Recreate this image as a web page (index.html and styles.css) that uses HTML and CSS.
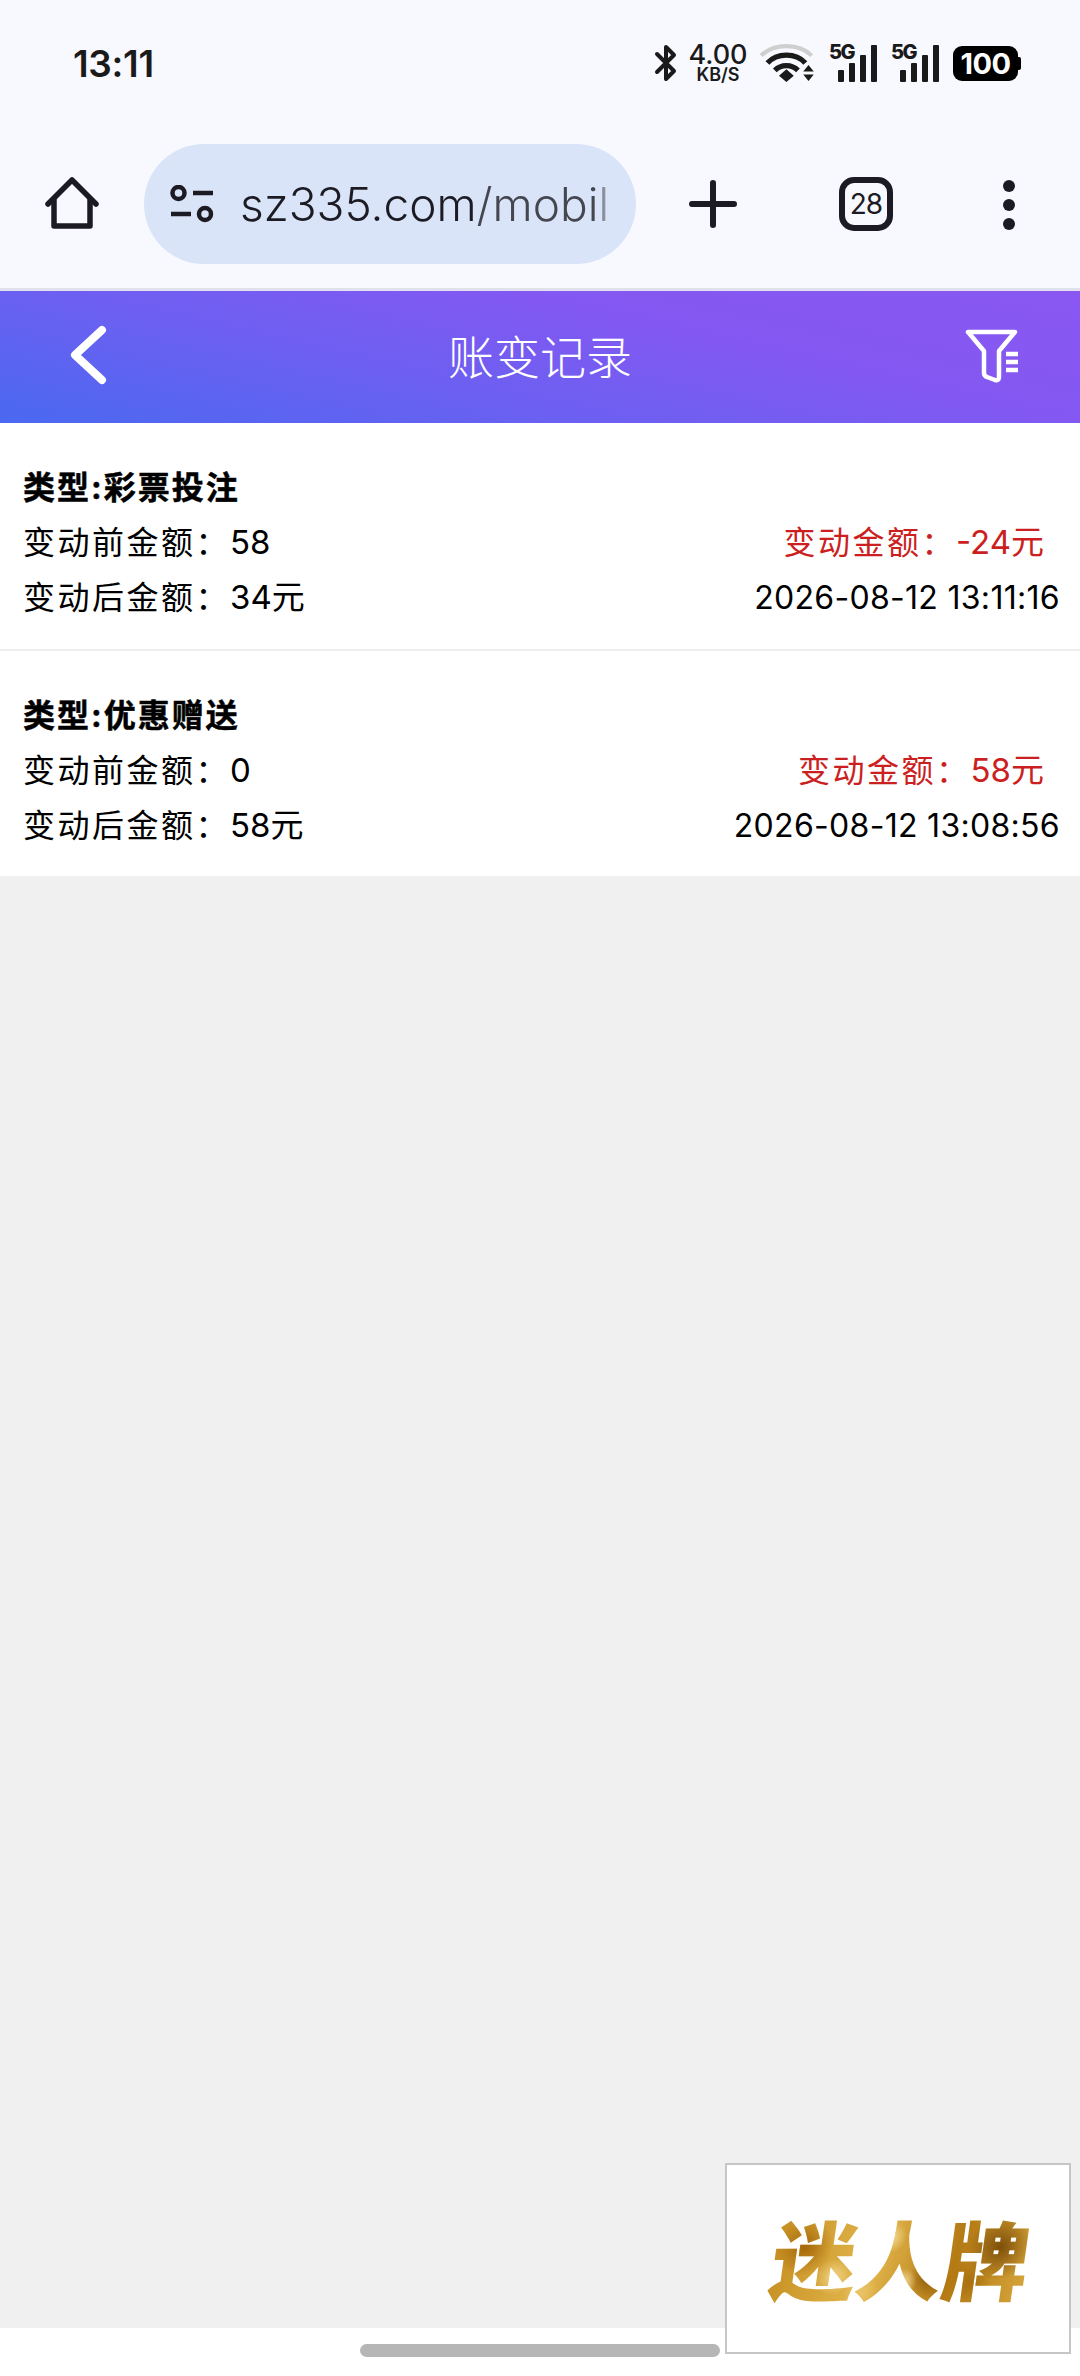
FILE: index.html
```html
<!DOCTYPE html>
<html lang="zh-CN">
<head>
    <meta charset="UTF-8">
    <meta name="viewport" content="width=device-width, initial-scale=1.0">
    <title>账变记录</title>
    <link rel="stylesheet" href="styles.css">
</head>
<body>

<!-- Phone status bar -->
<div class="status-bar">
    <span class="clock">13:11</span>
    <div class="status-icons">
        <svg class="icon-bt" viewBox="0 0 24 38" fill="none" stroke="#1a1a1a" stroke-width="4" stroke-linejoin="round" stroke-linecap="round">
            <path d="M3 10 L20 27 L12 35 L12 3 L20 11 L3 28"/>
        </svg>
        <div class="net-speed">
            <span class="net-num">4.00</span>
            <span class="net-unit">KB/S</span>
        </div>
        <svg class="icon-wifi" viewBox="0 0 54 38" fill="none" stroke-linecap="butt">
            <path d="M1 12 C13 0 37 0 49 12" stroke="#cfcfcf" stroke-width="4"/>
            <path d="M7 19 C16 9 34 9 43 19" stroke="#1a1a1a" stroke-width="5"/>
            <path d="M14 26 C20 20 30 20 36 26" stroke="#1a1a1a" stroke-width="5"/>
            <path d="M18 31 L25 25 L32 31 L25 37 Z" fill="#1a1a1a"/>
            <path d="M41 27 L46 21 L51 27 Z M41 30 L51 30 L46 36 Z" fill="#1a1a1a"/>
        </svg>
        <div class="signal">
            <span class="signal-label">5G</span>
            <span class="bar bar-1"></span>
            <span class="bar bar-2"></span>
            <span class="bar bar-3"></span>
            <span class="bar bar-4"></span>
        </div>
        <div class="signal">
            <span class="signal-label">5G</span>
            <span class="bar bar-1"></span>
            <span class="bar bar-2"></span>
            <span class="bar bar-3"></span>
            <span class="bar bar-4"></span>
        </div>
        <div class="battery">100</div>
    </div>
</div>

<!-- Browser toolbar -->
<div class="toolbar">
    <svg class="icon-home" viewBox="0 0 54 54" fill="none" stroke="#1c1b23" stroke-width="5.5" stroke-linejoin="round" stroke-linecap="round">
        <path d="M3 27 L27 3 L51 27"/>
        <path d="M9 23 L9 49 L45 49 L45 23"/>
    </svg>
    <div class="url-pill">
        <svg class="icon-tune" viewBox="0 0 44 38" fill="none" stroke="#1c1b23" stroke-width="4.5">
            <circle cx="8.500" cy="8" r="6"/>
            <path d="M23 8 L43 8"/>
            <circle cx="35" cy="29" r="6"/>
            <path d="M1 29 L21 29"/>
        </svg>
        <div class="url-text"><span class="url-host">sz335.com</span>/mobile</div>
    </div>
    <svg class="icon-plus" viewBox="0 0 48 48" fill="none" stroke="#1c1b23" stroke-width="6" stroke-linecap="round">
        <path d="M24 3 L24 45 M3 24 L45 24"/>
    </svg>
    <div class="tab-count">28</div>
    <div class="menu-dots">
        <span></span>
        <span></span>
        <span></span>
    </div>
</div>

<!-- Page header -->
<div class="page-header">
    <svg class="icon-back" viewBox="0 0 38 60" fill="none" stroke="#fff" stroke-width="8" stroke-linecap="round" stroke-linejoin="round">
        <path d="M33 5 L6 30 L33 55"/>
    </svg>
    <h1>账变记录</h1>
    <svg class="icon-filter" viewBox="0 0 56 56" fill="none" stroke="#fff" stroke-width="4.500" stroke-linejoin="round" stroke-linecap="round">
        <path d="M3 5 L50 5 L34 24 L34 50 Q34 54 30 53 L22 50 Q19 49 19 46 L19 24 Z"/>
        <path d="M41 27 L53 27 M41 35 L53 35 M41 43 L53 43" stroke-linecap="butt"/>
    </svg>
</div>

<div class="record-list">
    <div class="record">
        <div class="record-type">类型:彩票投注</div>
        <div class="record-line">
            <span>变动前金额：<span class="val">58</span></span>
            <span class="amount">变动金额：<span class="val">-24元</span></span>
        </div>
        <div class="record-line">
            <span>变动后金额：<span class="val">34元</span></span>
            <span class="stamp">2026-08-12 13:11:16</span>
        </div>
    </div>
    <div class="record">
        <div class="record-type">类型:优惠赠送</div>
        <div class="record-line">
            <span>变动前金额：<span class="val">0</span></span>
            <span class="amount">变动金额：<span class="val">58元</span></span>
        </div>
        <div class="record-line">
            <span>变动后金额：<span class="val">58元</span></span>
            <span class="stamp">2026-08-12 13:08:56</span>
        </div>
    </div>
</div>

<div class="page-fill"></div>

<div class="nav-bar">
    <span class="home-indicator"></span>
</div>

<!-- Floating ad -->
<div class="float-ad">
    <span class="ad-text">迷人牌</span>
</div>

</body>
</html>
```

FILE: styles.css
```css
* {
    box-sizing: border-box;
}

body {
    font-family: Inter, "Noto Sans CJK SC", sans-serif;
    margin: 0;
    width: 1080px;
    height: 2376px;
    position: relative;
    display: flex;
    flex-direction: column;
    background-color: #f0f0f0;
    color: #000;
    overflow: hidden;
}

/* status bar */
.status-bar {
    height: 144px;
    background-color: #f8f8ff;
    display: flex;
    justify-content: space-between;
    align-items: flex-start;
    padding: 42px 62px 0 73px;
}

.clock {
    font-family: Inter, sans-serif;
    font-size: 37px;
    font-weight: 600;
    line-height: 44px;
    color: #1a1a1a;
    letter-spacing: -0.3px;
}

.status-icons {
    display: flex;
    align-items: center;
    height: 42px;
}

.icon-bt {
    width: 26px;
    height: 38px;
    margin-right: 9px;
}

.net-speed {
    display: flex;
    flex-direction: column;
    align-items: center;
    width: 60px;
    color: #1a1a1a;
    margin-right: 12px;
}

.net-num {
    font-size: 27px;
    line-height: 24px;
    font-weight: 500;
}

.net-unit {
    font-size: 18px;
    line-height: 16px;
    font-weight: 600;
}

.icon-wifi {
    width: 57px;
    height: 40px;
    margin-right: 12px;
}

.signal {
    position: relative;
    width: 48px;
    height: 38px;
    margin-right: 14px;
    display: flex;
    justify-content: flex-end;
    align-items: flex-end;
    gap: 5px;
}

.signal-label {
    position: absolute;
    left: 0;
    top: -2px;
    font-size: 20px;
    line-height: 21px;
    font-weight: 800;
    letter-spacing: -1.5px;
    color: #1a1a1a;
}

.bar {
    width: 6px;
    background-color: #1a1a1a;
    border-radius: 1px;
}

.bar-1 { height: 12px; }
.bar-2 { height: 19px; }
.bar-3 { height: 27px; }
.bar-4 { height: 37px; }

.battery {
    width: 65px;
    height: 35px;
    background-color: #000;
    color: #fff;
    border-radius: 9px;
    font-size: 29px;
    font-weight: 700;
    line-height: 35px;
    text-align: center;
    letter-spacing: -0.5px;
    position: relative;
}

.battery::after {
    content: "";
    position: absolute;
    right: -3px;
    top: 11px;
    width: 3px;
    height: 13px;
    background-color: #000;
    border-radius: 0 2px 2px 0;
}

/* browser toolbar */
.toolbar {
    height: 147px;
    background-color: #f8f8ff;
    border-bottom: 3px solid #e1e1ee;
    display: flex;
    align-items: flex-start;
}

.icon-home {
    width: 54px;
    height: 54px;
    margin: 33px 0 0 45px;
}

.url-pill {
    width: 492px;
    height: 120px;
    margin-left: 45px;
    border-radius: 60px;
    background-color: #dae4f8;
    display: flex;
    align-items: center;
    padding: 0 24px 0 26px;
}

.icon-tune {
    width: 44px;
    height: 38px;
    flex-shrink: 0;
    margin-right: 26px;
}

.url-text {
    font-family: Inter, sans-serif;
    font-size: 46px;
    font-weight: 300;
    color: #44474f;
    white-space: nowrap;
    overflow: hidden;
    -webkit-mask-image: linear-gradient(to right, #000 96%, transparent);
    mask-image: linear-gradient(to right, #000 96%, transparent);
}

.url-host {
    color: #1c1b23;
}

.icon-plus {
    width: 48px;
    height: 48px;
    margin: 36px 0 0 53px;
}

.tab-count {
    width: 54px;
    height: 54px;
    margin: 33px 0 0 102px;
    border: 6px solid #1c1b23;
    border-radius: 15px;
    font-size: 28px;
    font-weight: 400;
    line-height: 42px;
    letter-spacing: -1px;
    text-align: center;
    color: #1c1b23;
}

.menu-dots {
    display: flex;
    flex-direction: column;
    gap: 7px;
    margin: 36px 0 0 110px;
}

.menu-dots span {
    width: 12px;
    height: 12px;
    border-radius: 50%;
    background-color: #1c1b23;
}

/* header */
.page-header {
    height: 132px;
    background: linear-gradient(13deg, #4a69f0 0%, #6a60f1 34%, #8458f2 67%, #8a57f2 100%);
    display: flex;
    align-items: center;
    justify-content: space-between;
    padding: 0 59px 4px 69px;
}

.page-header h1 {
    margin: 0 0 2px 8px;
    font-family: "Noto Sans CJK SC", sans-serif;
    font-size: 46px;
    font-weight: 300;
    color: #fff;
}

.icon-back {
    width: 38px;
    height: 60px;
}

.icon-filter {
    width: 56px;
    height: 56px;
}

/* records */
.record-list {
    background-color: #fff;
}

.record {
    padding: 37px 20px 24px 23px;
    border-bottom: 2px solid #eeeeee;
    font-size: 32px;
    line-height: 55px;
}

.record:last-child {
    border-bottom: none;
    padding-bottom: 23px;
}

.record-type {
    font-weight: 700;
    letter-spacing: 2px;
    -webkit-text-stroke: 0.5px #000;
}

.record-line {
    display: flex;
    justify-content: space-between;
    letter-spacing: 2.5px;
}

.val {
    letter-spacing: 0;
    font-size: 33px;
    font-family: Inter, "Noto Sans CJK SC", sans-serif;
}

.amount {
    color: #cc1f1f;
    margin-right: 16px;
}

.stamp {
    letter-spacing: 0.3px;
}

.page-fill {
    flex: 1;
}

.nav-bar {
    height: 48px;
    background-color: #fff;
    display: flex;
    justify-content: center;
    padding-top: 16px;
}

.home-indicator {
    width: 360px;
    height: 13px;
    border-radius: 7px;
    background-color: #b6b6b6;
}

/* floating ad, sits over the page */
.float-ad {
    position: absolute;
    left: 725px;
    top: 2163px;
    width: 346px;
    height: 191px;
    background-color: #fff;
    border: 2px solid #c6c6c6;
    display: flex;
    align-items: center;
    justify-content: center;
    padding: 0 0 4px 5px;
}

.ad-text {
    font-family: "Noto Sans CJK SC", sans-serif;
    font-size: 86px;
    font-weight: 900;
    line-height: 100px;
    transform: skewX(-8deg);
    background:
        radial-gradient(circle at 12% 40%, #a5660a 0, transparent 12%),
        radial-gradient(circle at 25% 70%, #f0d488 0, transparent 9%),
        radial-gradient(circle at 45% 30%, #f4dc94 0, transparent 10%),
        radial-gradient(circle at 52% 75%, #f3dc9c 0, transparent 9%),
        radial-gradient(circle at 62% 70%, #8f5a0a 0, transparent 12%),
        radial-gradient(circle at 88% 40%, #7d4f0b 0, transparent 14%),
        radial-gradient(circle at 78% 75%, #a8700f 0, transparent 10%),
        radial-gradient(circle at 36% 85%, #e9c468 0, transparent 10%),
        linear-gradient(100deg, #c48d1f, #e2b64c 40%, #b47a14 70%, #d6a63c);
    -webkit-background-clip: text;
    background-clip: text;
    color: transparent;
}
```
